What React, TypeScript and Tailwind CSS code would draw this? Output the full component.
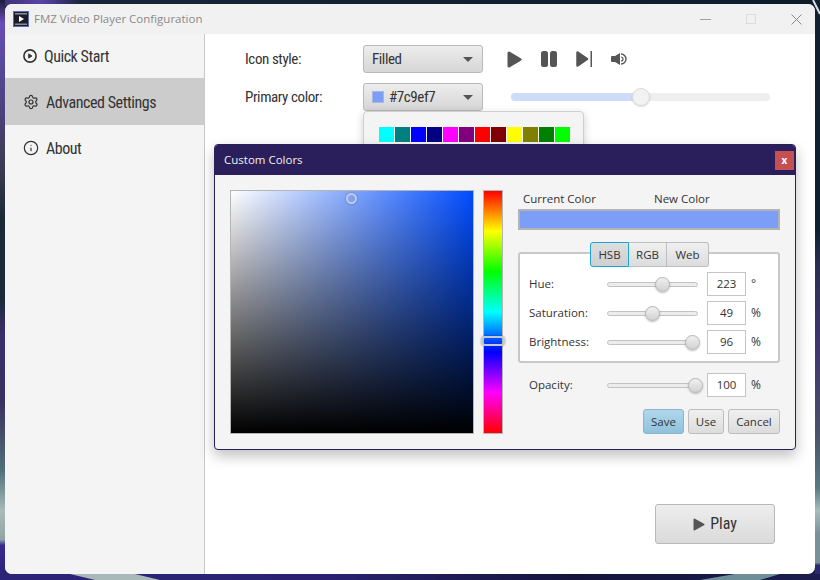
import React from 'react';
import { Settings, Info } from 'lucide-react';

const swatches = ['#00ffff', '#008080', '#0000ff', '#000080', '#ff00ff', '#800080', '#ff0000', '#800000', '#ffff00', '#808000', '#008000', '#00ff00'];

const narrow = "font-['Roboto_Condensed','Roboto',sans-serif] font-stretch-condensed";
const jfx = "font-['Open_Sans','Noto_Sans',sans-serif]";

function Wallpaper() {
  return (
    <svg className="absolute inset-0" width="820" height="580" viewBox="0 0 820 580">
      <defs>
        <linearGradient id="wl" x1="0" y1="0" x2="0" y2="1">
          <stop offset="0" stopColor="#1c1c3a" />
          <stop offset="0.04" stopColor="#6a4bb8" />
          <stop offset="0.1" stopColor="#5a4aa0" />
          <stop offset="0.3" stopColor="#3a3a50" />
          <stop offset="0.38" stopColor="#1a2a35" />
          <stop offset="0.52" stopColor="#1a2a3a" />
          <stop offset="0.58" stopColor="#3a2f6a" />
          <stop offset="0.7" stopColor="#3a3060" />
          <stop offset="0.82" stopColor="#50707a" />
          <stop offset="0.89" stopColor="#a8bcb8" />
          <stop offset="0.94" stopColor="#8fa5a5" />
          <stop offset="0.95" stopColor="#3a2a90" />
          <stop offset="1" stopColor="#2c2478" />
        </linearGradient>
        <linearGradient id="wr" x1="0" y1="0" x2="0" y2="1">
          <stop offset="0" stopColor="#14202e" />
          <stop offset="0.4" stopColor="#0f2030" />
          <stop offset="0.46" stopColor="#2a2f50" />
          <stop offset="0.6" stopColor="#3f3570" />
          <stop offset="0.75" stopColor="#4a5068" />
          <stop offset="0.85" stopColor="#5a7a80" />
          <stop offset="0.89" stopColor="#a8bcbc" />
          <stop offset="0.93" stopColor="#7a9098" />
          <stop offset="0.98" stopColor="#7a9098" />
          <stop offset="0.985" stopColor="#2a2a70" />
        </linearGradient>
        <linearGradient id="wb" x1="0" y1="0" x2="1" y2="0">
          <stop offset="0" stopColor="#2c2478" />
          <stop offset="0.4" stopColor="#2a2270" />
          <stop offset="0.7" stopColor="#14143c" />
          <stop offset="1" stopColor="#1c1c50" />
        </linearGradient>
        <linearGradient id="wt" x1="0" y1="0" x2="1" y2="0">
          <stop offset="0" stopColor="#3a3070" />
          <stop offset="0.05" stopColor="#5a44a8" />
          <stop offset="0.1" stopColor="#18243a" />
          <stop offset="1" stopColor="#0e1c2a" />
        </linearGradient>
      </defs>
      <rect width="820" height="6" fill="url(#wt)" />
      <rect y="572" width="820" height="8" fill="url(#wb)" />
      <rect width="5" height="574" fill="url(#wl)" />
      <rect x="815" width="5" height="574" fill="url(#wr)" />
      <polygon points="70,574 135,574 160,580 95,580" fill="#a9b8b8" />
      <polygon points="735,574 780,574 760,580 700,580" fill="#6f8f98" />
      <path d="M813 0 L820 14" stroke="#d8e0e8" strokeWidth="2" />
    </svg>
  );
}

function AppLogo() {
  return (
    <svg width="16" height="16" viewBox="0 0 16 16">
      <rect x="0.5" y="0.5" width="15" height="15" fill="#1c1c28" stroke="#5a6cc0" />
      <rect x="2" y="2" width="12" height="1.5" fill="#8c8c9c" />
      <rect x="2" y="12.5" width="12" height="1.5" fill="#8c8c9c" />
      <polygon points="6,5 11,8 6,11" fill="#ffffff" />
    </svg>
  );
}

function Combo({ children }: { children: React.ReactNode }) {
  return (
    <div className="flex h-[28px] w-[120px] items-center justify-between rounded-[3px] border border-[#b9b9b9] bg-gradient-to-b from-[#ededed] to-[#d6d6d6] pl-[8px] pr-[9px]">
      <div className="flex items-center gap-[5px]">{children}</div>
      <div className="h-0 w-0 border-x-[5px] border-t-[5px] border-x-transparent border-t-[#555555]" />
    </div>
  );
}

function HslRow({ label, pos, value, unit }: { label: string; pos: number; value: string; unit: string }) {
  return (
    <div className="flex h-[24px] items-center">
      <span className="w-[78px] text-[11.5px] text-[#333333]">{label}</span>
      <div className="relative h-[5px] w-[91px] rounded-full border border-[#c2c2c2] bg-[#ececec]">
        <div
          className="absolute top-[-6px] h-[15px] w-[15px] rounded-full border border-[#b5b5b5] bg-gradient-to-b from-[#f0f0f0] to-[#d2d2d2] shadow-[0_1px_2px_rgba(0,0,0,0.25)]"
          style={{ left: pos - 8 }}
        />
      </div>
      <div className="ml-[9px] flex h-[24px] w-[39px] items-center justify-center border border-[#c4c4c4] bg-white text-[11.5px] text-[#333333]">{value}</div>
      <span className="ml-[5px] text-[12px] text-[#333333]">{unit}</span>
    </div>
  );
}

function JfxButton({ children, width, primary }: { children: React.ReactNode; width: string; primary?: boolean }) {
  return (
    <div
      className={`flex h-[25px] items-center justify-center rounded-[3px] border text-[11.5px] text-[#333333] ${width} ${
        primary ? 'border-[#8db4c8] bg-gradient-to-b from-[#b0d8ec] to-[#8fc2dc]' : 'border-[#bdbdbd] bg-gradient-to-b from-[#f0f0f0] to-[#dcdcdc]'
      }`}
    >
      {children}
    </div>
  );
}

function CustomColors() {
  return (
    <div className={`absolute left-[209px] top-[140px] flex h-[306px] w-[582px] flex-col overflow-hidden rounded-[4px] border border-[#2a1f5a] bg-[#f4f4f4] shadow-[0_6px_14px_rgba(0,0,0,0.25)] ${jfx}`}>
      <div className="flex h-[30px] shrink-0 items-center justify-between bg-[#2a1f5a] pl-[9px] pr-[1px] text-[11.5px] text-[#f0f0f0]">
        <span>Custom Colors</span>
        <div className="flex h-[19px] w-[19px] items-center justify-center bg-[#c64f52] text-[10px] font-bold leading-none text-white">x</div>
      </div>
      <div className="flex pl-[15px] pt-[15px]">
        {/* saturation / brightness square */}
        <div className="relative h-[244px] w-[244px] border border-[#b5b5b5] bg-[#004cff]">
          <div className="absolute inset-0 bg-gradient-to-r from-white to-transparent" />
          <div className="absolute inset-0 bg-gradient-to-b from-transparent to-black" />
          <div className="absolute left-[115px] top-[2px] h-[11px] w-[11px] rounded-full border-2 border-[#c4cbe0] bg-transparent shadow-[0_0_2px_rgba(0,0,0,0.4)]" />
        </div>
        {/* hue bar */}
        <div className="relative ml-[9px] h-[244px] w-[20px] border border-[#b5b5b5] bg-[linear-gradient(to_bottom,#ff0000,#ffff00_16.6%,#00ff00_33.3%,#00ffff_50%,#0000ff_66.6%,#ff00ff_83.3%,#ff0000)]">
          <div className="absolute left-[-3px] top-[145px] h-[10px] w-[24px] rounded-[4px] border-2 border-[#c4c8d0] shadow-[0_0_2px_rgba(0,0,0,0.4)]" />
        </div>
        {/* controls */}
        <div className="ml-[15px] flex w-[262px] flex-col">
          <div className="mt-[2px] flex h-[14px] items-center pl-[5px] text-[11.5px] text-[#333333]">
            <span className="w-[131px]">Current Color</span>
            <span>New Color</span>
          </div>
          <div className="mt-[3px] h-[21px] border-2 border-[#b3b3b3] bg-[#7c9ef7]" />
          <div className="relative mt-[22px] h-[111px] rounded-[3px] border-2 border-[#c8c8c8] bg-white pl-[9px] pt-[18px]">
            <div className="absolute left-[70px] top-[-12px] flex h-[25px] text-[11.5px] text-[#333333]">
              <div className="flex w-[39px] items-center justify-center rounded-l-[3px] border border-[#18a7d8] bg-gradient-to-b from-[#dedede] to-[#cfcfcf]">HSB</div>
              <div className="flex w-[38px] items-center justify-center border-y border-r border-[#bdbdbd] bg-gradient-to-b from-[#f0f0f0] to-[#dcdcdc]">RGB</div>
              <div className="flex w-[42px] items-center justify-center rounded-r-[3px] border-y border-r border-[#bdbdbd] bg-gradient-to-b from-[#f0f0f0] to-[#dcdcdc]">Web</div>
            </div>
            <div className="flex flex-col gap-[5px]">
              <HslRow label="Hue:" pos={55} value="223" unit="°" />
              <HslRow label="Saturation:" pos={45} value="49" unit="%" />
              <HslRow label="Brightness:" pos={85} value="96" unit="%" />
            </div>
          </div>
          <div className="mt-[10px] pl-[11px]">
            <HslRow label="Opacity:" pos={88} value="100" unit="%" />
          </div>
          <div className="mt-[12px] flex justify-end gap-[4px]">
            <JfxButton width="w-[41px]" primary>Save</JfxButton>
            <JfxButton width="w-[36px]">Use</JfxButton>
            <JfxButton width="w-[52px]">Cancel</JfxButton>
          </div>
        </div>
      </div>
    </div>
  );
}

function NavItem({ icon, label, active, height }: { icon: React.ReactNode; label: string; active?: boolean; height: string }) {
  return (
    <div className={`flex items-center gap-[7px] pl-[18px] text-[#333333] ${height} ${active ? 'bg-[#cccccc]' : ''}`}>
      {icon}
      <span className={`pt-[2px] text-[16px] tracking-[-0.45px] ${narrow}`}>{label}</span>
    </div>
  );
}

export default function App() {
  return (
    <div className="relative h-[580px] w-[820px] overflow-hidden bg-[#101838] pb-[6px] pl-[5px] pr-[5px] pt-[4px]">
      <Wallpaper />
      <div className="relative flex h-full flex-col overflow-hidden rounded-[7px] bg-white">
        {/* title bar */}
        <div className={`flex h-[30px] shrink-0 items-center bg-[#f1f1f1] pl-[8px] text-[11.5px] text-[#8a8a8a] ${jfx}`}>
          <AppLogo />
          <span className="ml-[5px]">FMZ Video Player Configuration</span>
          <div className="ml-auto flex items-center">
            <div className="h-px w-[11px] bg-[#a0a0a0]" />
            <div className="ml-[35px] h-[10px] w-[10px] border border-[#dcdcdc]" />
            <svg className="ml-[35px] mr-[13px]" width="11" height="11" viewBox="0 0 11 11">
              <path d="M0.5 0.5 L10.5 10.5 M10.5 0.5 L0.5 10.5" stroke="#8a8a8a" strokeWidth="1" />
            </svg>
          </div>
        </div>
        <div className="flex min-h-0 flex-1">
          {/* sidebar */}
          <div className="w-[200px] shrink-0 border-r border-[#c8c8c8] bg-[#f4f4f4]">
            <NavItem
              height="h-[44px]"
              label="Quick Start"
              icon={
                <svg width="14" height="14" viewBox="0 0 14 14">
                  <circle cx="7" cy="7" r="6.1" fill="none" stroke="#333333" strokeWidth="1.6" />
                  <path d="M5.6 4.8 L9 7 L5.6 9.2 Z" fill="#333333" stroke="#333333" strokeWidth="0.8" strokeLinejoin="round" />
                </svg>
              }
            />
            <NavItem height="h-[47px]" label="Advanced Settings" active icon={<Settings size={16} strokeWidth={1.8} />} />
            <NavItem height="h-[46px]" label="About" icon={<Info size={16} strokeWidth={1.8} />} />
          </div>
          {/* content */}
          <div className="relative flex flex-1 flex-col pl-[40px] pr-[40px] pt-[11px]">
            <div className={`flex h-[28px] items-center text-[15px] tracking-[-0.4px] text-[#333333] ${narrow}`}>
              <span className="w-[118px]">Icon style:</span>
              <Combo><span>Filled</span></Combo>
              <div className="ml-[24px] flex items-center gap-[19px]">
                <svg width="15" height="17" viewBox="0 0 15 17"><path d="M2 2 L13 8.5 L2 15 Z" fill="#555555" stroke="#555555" strokeWidth="3" strokeLinejoin="round" /></svg>
                <svg width="16" height="16" viewBox="0 0 16 16"><rect x="0" y="0" width="7" height="16" rx="2.5" fill="#555555" /><rect x="9" y="0" width="7" height="16" rx="2.5" fill="#555555" /></svg>
                <svg width="16" height="16" viewBox="0 0 16 16"><path d="M1.5 1.5 L11 8 L1.5 14.5 Z" fill="#555555" stroke="#555555" strokeWidth="2.5" strokeLinejoin="round" /><rect x="14.5" y="0" width="1.5" height="16" fill="#555555" /></svg>
                <svg width="16" height="12" viewBox="0 0 16 12"><path d="M0 4 Q0 3 1 3 L4 3 L9 0 L9 12 L4 9 L1 9 Q0 9 0 8 Z" fill="#555555" /><path d="M10 4 A2 2 0 0 1 10 8" fill="none" stroke="#555555" strokeWidth="1.2" /><path d="M10 1 A5 5 0 0 1 10 11" fill="none" stroke="#555555" strokeWidth="1.4" /></svg>
              </div>
            </div>
            <div className={`mt-[10px] flex h-[28px] items-center text-[15px] tracking-[-0.4px] text-[#333333] ${narrow}`}>
              <span className="w-[118px]">Primary color:</span>
              <Combo>
                <div className="h-[12px] w-[12px] border border-[#a8b8e0] bg-[#7c9ef7]" />
                <span>#7c9ef7</span>
              </Combo>
              <div className="relative ml-[28px] h-[8px] w-[259px] rounded-full bg-[#eeeeee]">
                <div className="h-full w-[130px] rounded-l-full bg-[#cfdcf9]" />
                <div className="absolute left-[121px] top-[-5px] h-[18px] w-[18px] rounded-full border border-[#dcdcdc] bg-[#f2f2f2] shadow-[0_1px_2px_rgba(0,0,0,0.15)]" />
              </div>
            </div>
            {/* colour popup, mostly hidden by the dialog */}
            <div className="absolute left-[158px] top-[77px] h-[70px] w-[221px] rounded-[4px] border border-[#cfcfcf] bg-[#f4f4f4] pl-[15px] pt-[15px] shadow-[0_3px_8px_rgba(0,0,0,0.2)]">
              <div className="flex gap-px">
                {swatches.map((c) => (
                  <div key={c} className="h-[15px] w-[15px]" style={{ backgroundColor: c }} />
                ))}
              </div>
            </div>
            <div className={`mb-[30px] mt-auto flex h-[40px] w-[120px] items-center justify-center gap-[5px] self-end rounded-[3px] border border-[#b8b8b8] bg-gradient-to-b from-[#eeeeee] to-[#dadada] text-[16px] text-[#333333] ${narrow}`}>
              <svg width="12" height="13" viewBox="0 0 12 13"><path d="M1.5 1.5 L10.5 6.5 L1.5 11.5 Z" fill="#555555" stroke="#555555" strokeWidth="2" strokeLinejoin="round" /></svg>
              <span>Play</span>
            </div>
          </div>
        </div>
        <CustomColors />
      </div>
    </div>
  );
}
